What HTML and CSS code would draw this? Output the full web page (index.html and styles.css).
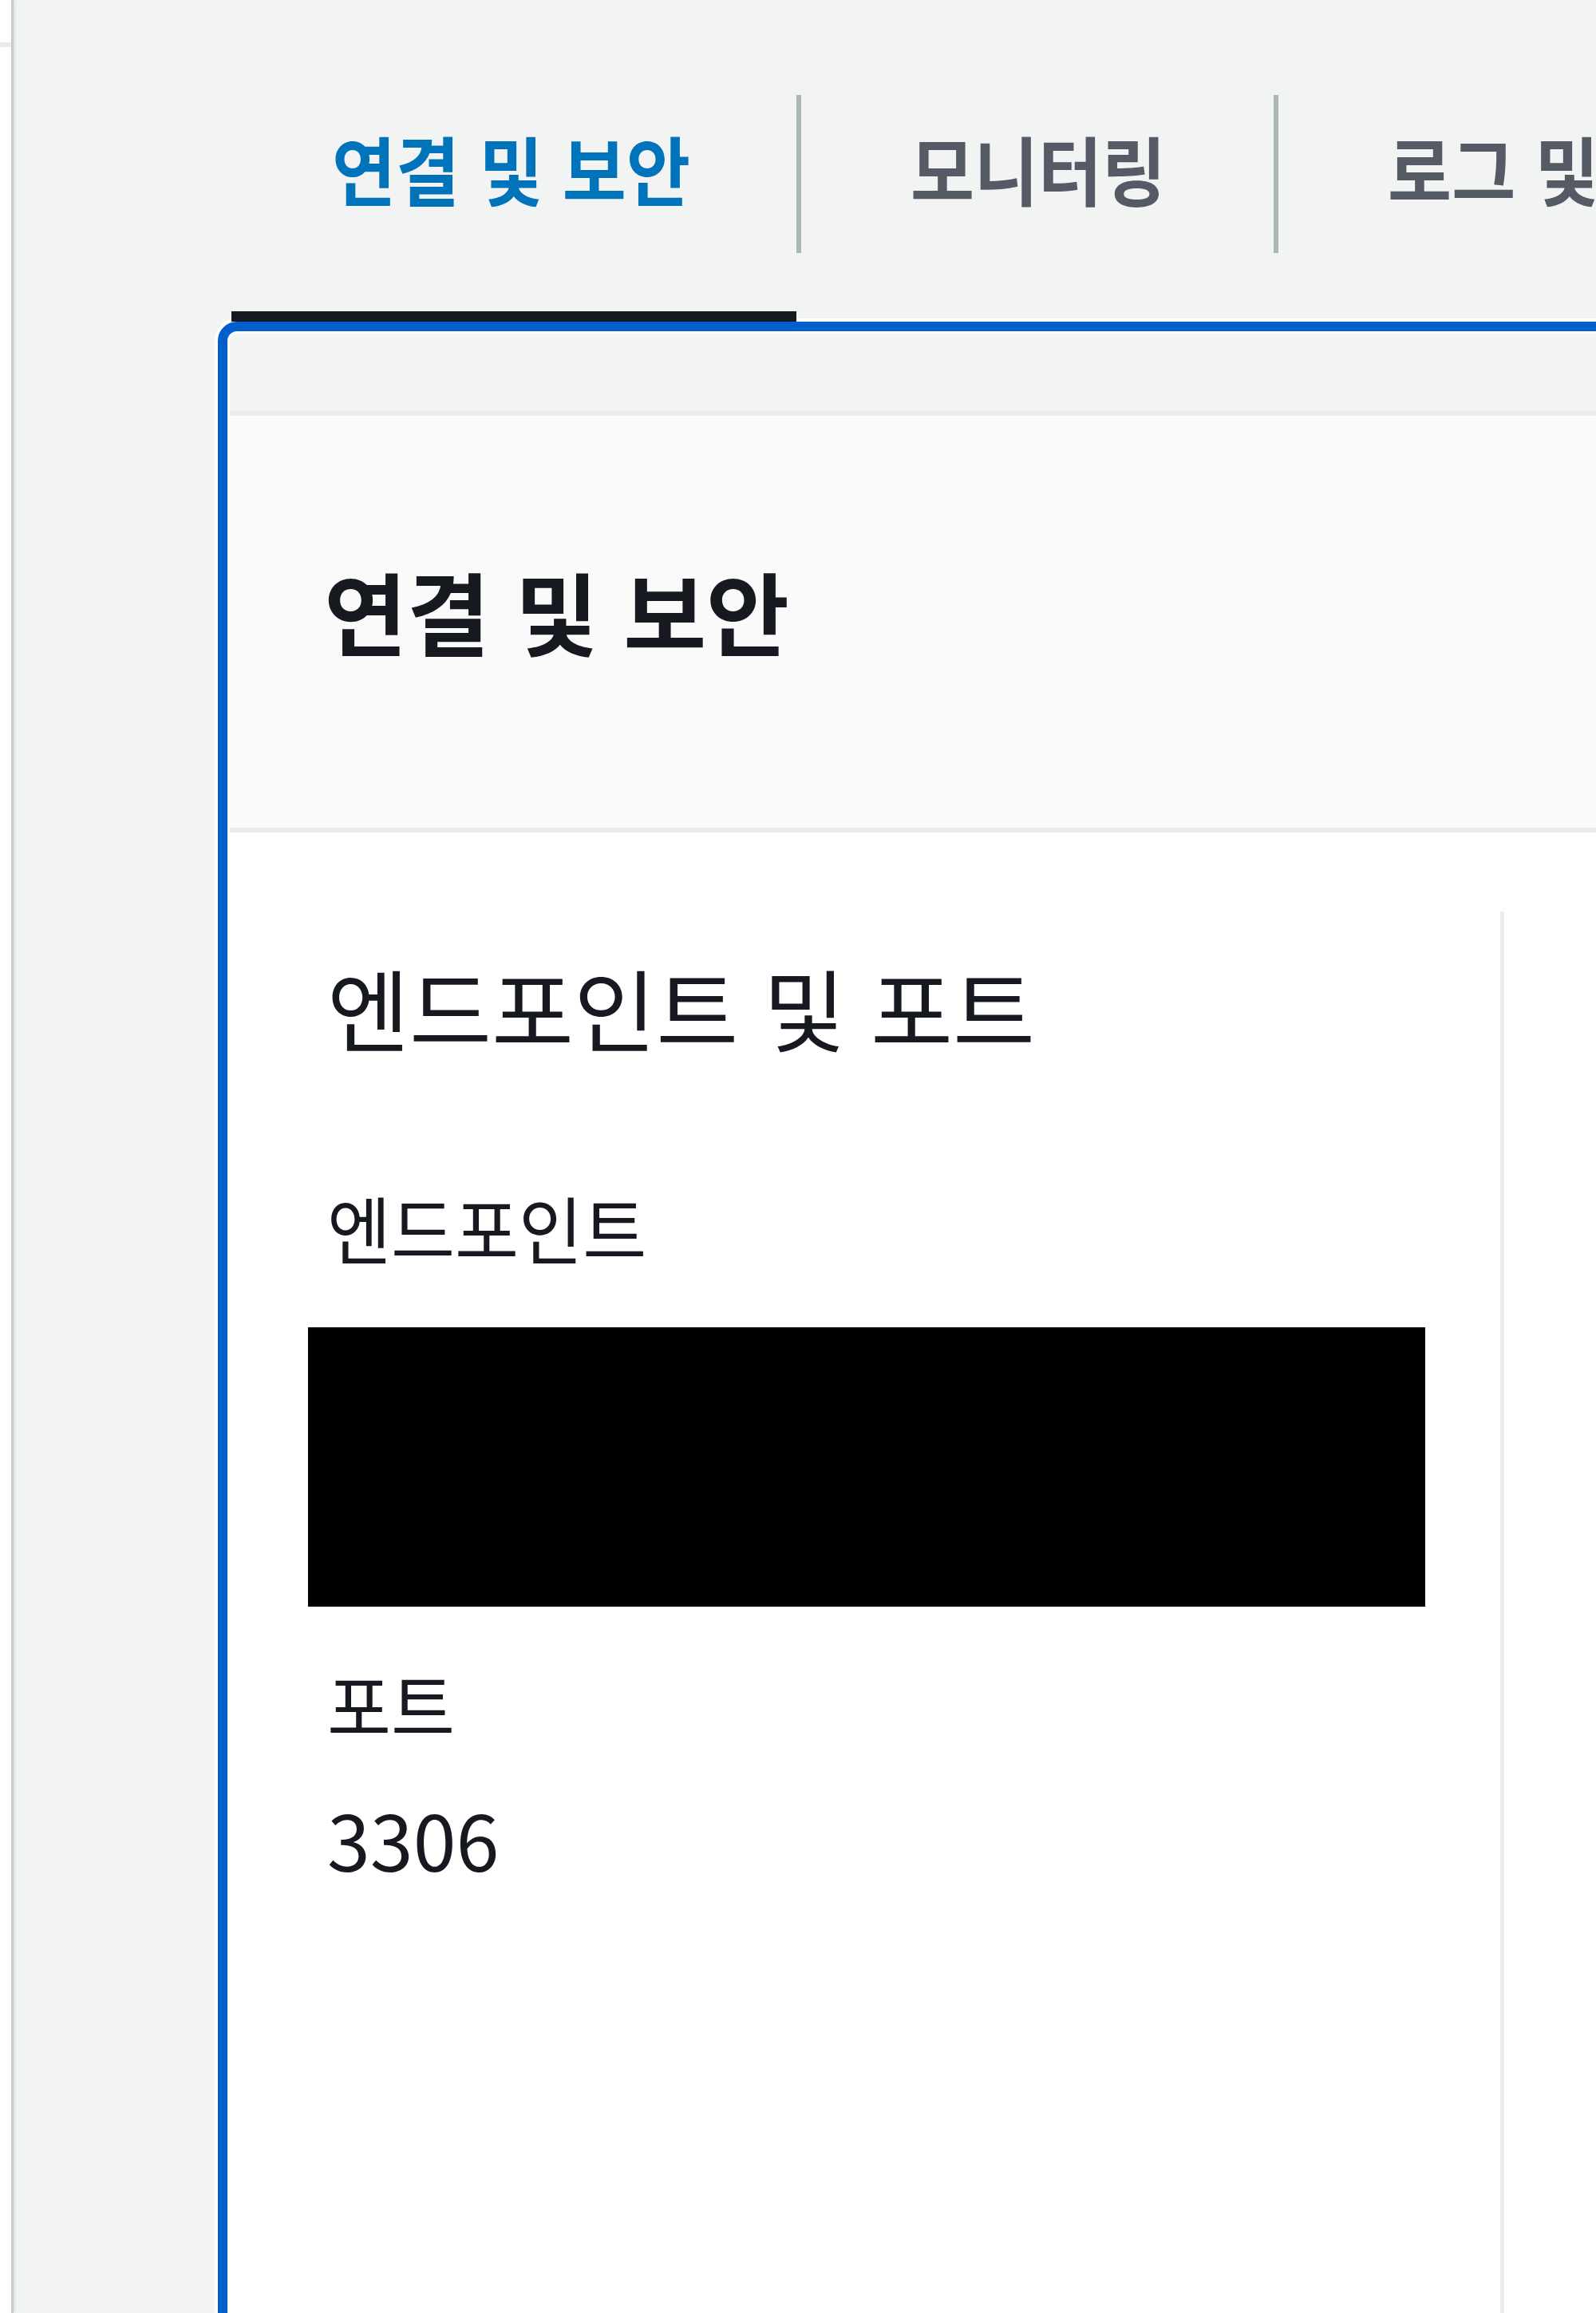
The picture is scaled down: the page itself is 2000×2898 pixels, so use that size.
FILE: index.html
```html
<!DOCTYPE html>
<html lang="ko">
<head>
<meta charset="utf-8">
<title>연결 및 보안</title>
<link rel="stylesheet" href="styles.css">
</head>
<body>
<div class="page">
  <aside class="rail"><div class="rail-mark"></div></aside>
  <main class="main">
    <nav class="tabs">
      <div class="tab tab-active"><span class="tab-label"><span class="tab-text">연결 및 보안</span></span></div>
      <div class="tab"><span class="tab-label"><span class="tab-text">모니터링</span></span></div>
      <div class="tab"><span class="tab-label"><span class="tab-text">로그 및 이벤트</span></span></div>
    </nav>
    <section class="panel">
      <div class="card">
        <header class="card-head">
          <h2 class="card-title">연결 및 보안</h2>
        </header>
        <div class="card-body">
          <div class="col">
            <h3 class="col-title">엔드포인트 및 포트</h3>
            <div class="field-label">엔드포인트</div>
            <div class="redacted"></div>
            <div class="field-label field-label-port">포트</div>
            <div class="field-value">3306</div>
          </div>
          <div class="col col-divided"></div>
        </div>
      </div>
    </section>
  </main>
</div>
</body>
</html>
```

FILE: styles.css
```css
* { box-sizing: border-box; }
html, body { margin: 0; padding: 0; }
body {
  font-family: "Noto Sans CJK KR", "Noto Sans", sans-serif;
  color: #16191f;
  background: #f2f3f3;
}
.page {
  display: flex;
  height: 2898px;
  overflow: hidden;
}
.rail {
  flex: 0 0 17px;
  background: #fff;
  border-right: 3px solid #c3ccce;
  box-shadow: 2px 0 3px rgba(0, 0, 0, 0.07);
  position: relative;
  z-index: 2;
}
.rail-mark {
  margin-top: 53px;
  height: 6px;
  background: #e8eaeb;
}
.main {
  flex: 1;
  min-width: 0;
  display: flex;
  flex-direction: column;
  padding-left: 268px;
}
.tabs {
  display: flex;
  padding-top: 119px;
  padding-left: 5px;
  position: relative;
  z-index: 1;
}
.tab {
  flex: 0 0 auto;
  padding-bottom: 73px;
  border-bottom: 13px solid transparent;
}
.tab-active { border-bottom-color: #16191f; }
.tab-label {
  display: flex;
  height: 198px;
  padding: 50px 135px 0 137px;
  font-size: 87px;
  font-weight: 700;
  line-height: 1;
  color: #545b64;
  white-space: nowrap;
}
.tab:first-child .tab-label { padding-left: 126px; padding-right: 133px; }
.tab + .tab .tab-label { border-left: 6px solid #aab7b8; }
.tab-active .tab-label { color: #0073bb; }
.tab-text {
  display: inline-block;
  transform: scaleY(1.09);
}
.panel {
  flex: 1;
  display: flex;
  margin: 12px -80px -80px 0;
  padding: 100px 0 0 3px;
  background: #f2f3f3;
  border-radius: 12px;
  outline: 12px solid #005fcc;
  box-shadow: 0 0 0 16px #fff, inset 0 0 0 3px #fff;
}
.card {
  flex: 1;
  display: flex;
  flex-direction: column;
  background: #fff;
  border-top: 6px solid #eaeded;
}
.card-head {
  height: 522px;
  padding: 187px 0 0 118px;
  background: #fafafa;
  border-bottom: 6px solid #eaeded;
}
.card-title {
  margin: 0;
  font-size: 113px;
  font-weight: 700;
  line-height: 1;
}
.card-body {
  flex: 1;
  display: grid;
  grid-template-columns: 1592px 1fr;
}
.col {
  padding: 162px 0 0 122px;
}
.col-divided {
  margin-top: 99px;
  padding: 0;
  border-left: 5px solid #eaeded;
}
.col-title {
  margin: 0;
  font-size: 112px;
  font-weight: 400;
  line-height: 1;
}
.field-label {
  margin-top: 177px;
  font-size: 87px;
  line-height: 1;
  transform: scaleY(1.06);
  transform-origin: left center;
}
.redacted {
  margin: 82px 0 0 -24px;
  width: 1400px;
  height: 350px;
  background: #000;
}
.field-label-port { margin-top: 78px; }
.field-value {
  margin-top: 76px;
  font-size: 97px;
  line-height: 1;
}
```
